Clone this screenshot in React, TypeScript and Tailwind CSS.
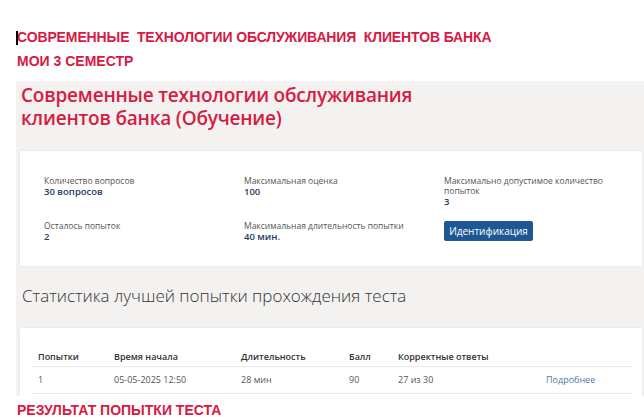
const stats = [
  { label: "Количество вопросов", value: "30 вопросов" },
  { label: "Максимальная оценка", value: "100" },
  { label: "Максимально допустимое количество попыток", value: "3" },
  { label: "Осталось попыток", value: "2" },
  { label: "Максимальная длительность попытки", value: "40 мин." },
];

const columns = ["Попытки", "Время начала", "Длительность", "Балл", "Корректные ответы", ""];
const row = ["1", "05-05-2025 12:50", "28 мин", "90", "27 из 30"];

export default function App() {
  return (
    <div className="w-[644px] h-[420px] overflow-hidden bg-white font-['Open_Sans',sans-serif]">
      <div className="pt-[25px] pl-[17px] font-['Liberation_Sans',Arial,sans-serif] font-bold text-[14px] text-[#d71a43] whitespace-pre">
        <div className="relative h-[24px] leading-[24px] uppercase tracking-[-0.12px]">
          <span className="absolute left-[-1px] top-[6px] h-[14px] w-[2px] bg-black" />
          {"Современные  технологии обслуживания  клиентов банка"}
        </div>
        <div className="h-[24px] leading-[24px]">МОИ 3 СЕМЕСТР</div>
      </div>

      <div className="mt-[8px] ml-[16px] h-[315px] overflow-hidden bg-[#f3f2f0]">
        <h1 className="pt-[3px] pl-[5px] text-[19px] leading-[23px] font-semibold tracking-[-0.2px] text-[#d51c43]">
          Современные технологии обслуживания
          <br />
          клиентов банка (Обучение)
        </h1>

        <div className="mt-[21px] ml-[4px] mr-[2px] bg-white shadow-[0_0_2px_rgba(0,0,0,0.08)]">
          <div className="grid grid-cols-[200px_200px_200px] gap-y-[14px] pt-[25px] pb-[24px] pl-[24px]">
            {stats.map((s) => (
              <div key={s.label}>
                <div className="text-[8.5px] leading-[10px] text-[#555] w-[160px]">{s.label}</div>
                <div className="text-[9.5px] leading-[11px] font-semibold text-[#1f3a63]">{s.value}</div>
              </div>
            ))}
            <div className="flex">
              <button className="block h-[20px] w-[89px] rounded-[2px] bg-[#1d5894] text-[10px] leading-[20px] text-white">
                Идентификация
              </button>
            </div>
          </div>
        </div>

        <h2 className="mt-[18px] pl-[6px] text-[17px] leading-[24px] font-light text-[#333]">
          Статистика лучшей попытки прохождения теста
        </h2>

        <div className="mt-[20px] ml-[4px] mr-[2px] h-[120px] bg-white pt-[19px] pl-[12px] pr-[10px] shadow-[0_0_2px_rgba(0,0,0,0.08)]">
          <div className="grid grid-cols-[76px_127px_108px_49px_148px_1fr] h-[20px] items-center pl-[6px] border-b border-[#ebebeb] text-[9px] font-semibold text-[#333]">
            {columns.map((c, i) => (
              <div key={i}>{c}</div>
            ))}
          </div>
          <div className="grid grid-cols-[76px_127px_108px_49px_148px_1fr] h-[27px] items-center pl-[6px] border-b border-[#ebebeb] text-[9px] text-[#555]">
            {row.map((c, i) => (
              <div key={i}>{c}</div>
            ))}
            <div className="text-[#4e79a5]">Подробнее</div>
          </div>
        </div>
      </div>

      <div className="mt-[6px] pl-[17px] h-[16px] leading-[16px] font-['Liberation_Sans',Arial,sans-serif] font-bold text-[14px] text-[#d71a43]">
        РЕЗУЛЬТАТ ПОПЫТКИ ТЕСТА
      </div>
    </div>
  );
}
